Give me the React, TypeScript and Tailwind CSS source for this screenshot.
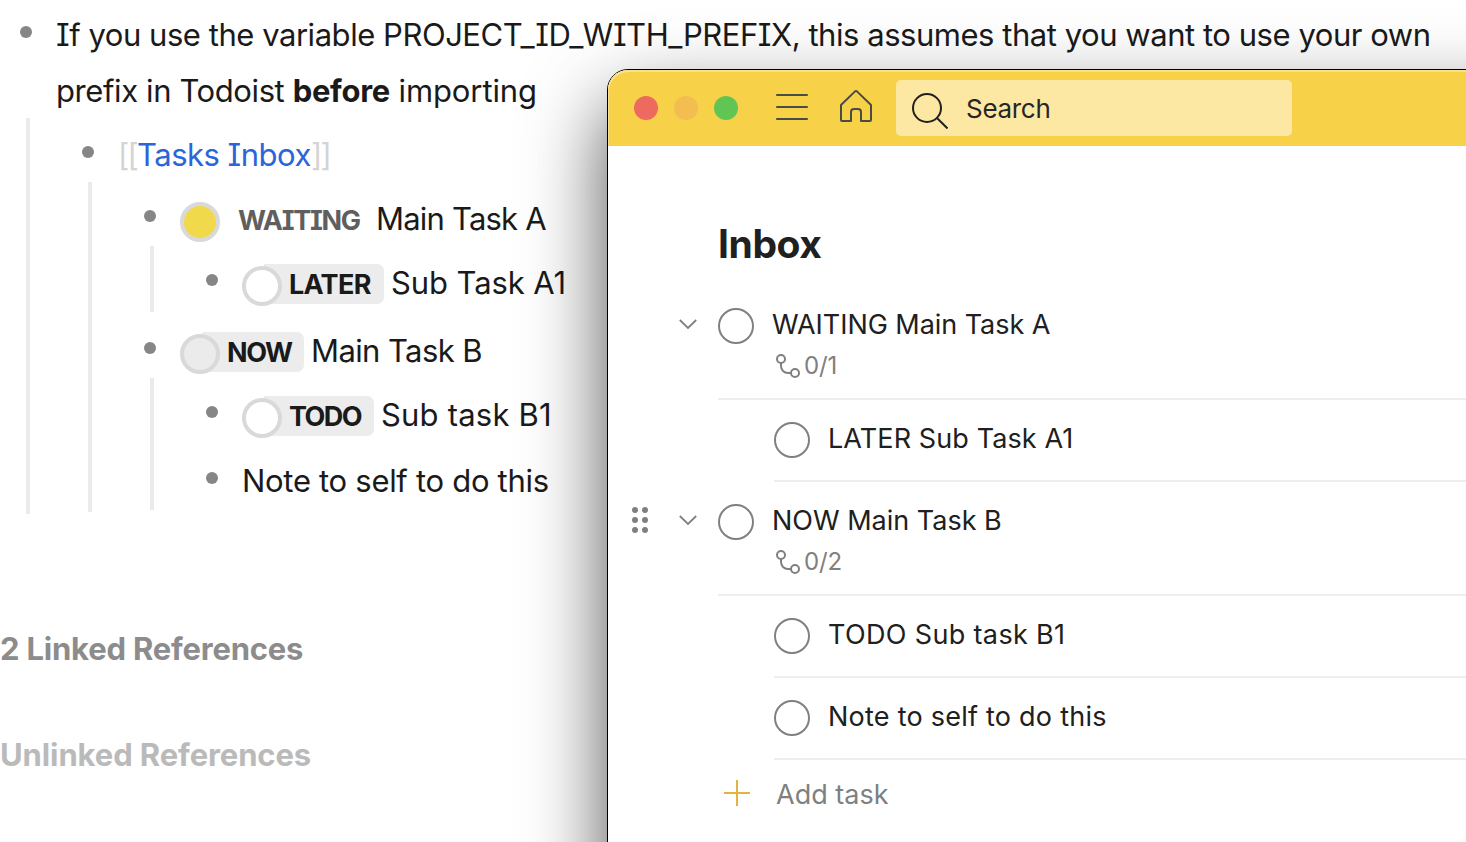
import type { ReactNode } from "react";

const NOTE_FONT =
  "font-['Inter','Liberation_Sans',sans-serif] [font-feature-settings:'cv08'_1]";

function Row({
  children,
  low = false,
}: {
  children: ReactNode;
  low?: boolean;
}) {
  return (
    <div className={low ? "flex h-[66px] items-start pt-0.5" : "flex h-16 items-start"}>
      <span className="mt-7 ml-[52px] size-3 shrink-0 rounded-full bg-[#868686]" />
      <div className="ml-6 flex items-start whitespace-nowrap">{children}</div>
    </div>
  );
}

function Text({ children, className = "" }: { children: ReactNode; className?: string }) {
  return <span className={`pt-[9px] leading-14 ${className}`}>{children}</span>;
}

function Marker({
  label,
  width,
  fill = "bg-white",
  tracking,
}: {
  label: string;
  width: string;
  fill?: string;
  tracking: string;
}) {
  return (
    <span className="flex">
      <span
        className={`z-10 mt-5 size-10 shrink-0 rounded-full border-4 border-[#d9d9d9] ${fill}`}
      />
      <span
        className={`mt-[18px] -ml-[18px] h-10 rounded-r-[7px] bg-[#ececec] pt-px pl-[25px] text-[27px] leading-10 font-bold ${width} ${tracking}`}
      >
        {label}
      </span>
    </span>
  );
}

function Outline() {
  return (
    <div className={`text-[31px] text-[#1a1a1a] ${NOTE_FONT}`}>
      <div className="flex h-[118px] items-start pt-[7px]">
        <span className="mt-[19px] ml-5 size-3 shrink-0 rounded-full bg-[#868686]" />
        <p className="ml-6 leading-14 whitespace-nowrap">
          <span className="tracking-[-0.46px]">
            If you use the variable PROJECT_ID_WITH_PREFIX, this assumes that you want to use your own
          </span>
          <br />
          <span className="tracking-[-0.4px]">prefix in Todoist </span>
          <b className="tracking-[-0.3px]">before</b>
          <span className="tracking-[-0.1px]"> importing</span>
        </p>
      </div>

      <div className="ml-[26px] border-l-4 border-[#ebebeb] pb-0.5">
        <Row>
          <Text className="tracking-[-0.5px] text-[#2b65d9]">
            <span className="tracking-[-1.8px] text-[#d4d4d4]">[[</span>Tasks Inbox
            <span className="tracking-[-1.8px] text-[#d4d4d4]">]]</span>
          </Text>
        </Row>
        <div className="ml-[58px] border-l-4 border-[#ebebeb] pb-0.5">
          <Row>
            <span className="mt-5 size-10 rounded-full border-4 border-[#d9d9d9] bg-[#f0d94a]" />
            <span className="mt-[18px] ml-[18px] w-[138px] pt-px text-[27px] leading-10 font-bold tracking-[-1.3px] text-[#5f5f5f]">
              WAITING
            </span>
            <Text className="tracking-[-0.8px]">Main Task A</Text>
          </Row>
          <div className="ml-[58px] border-l-4 border-[#ebebeb] pb-0.5">
            <Row>
              <Marker label="LATER" width="w-[120px]" tracking="tracking-[-0.7px]" />
              <Text className="ml-[7px] tracking-[-0.1px]">Sub Task A1</Text>
            </Row>
          </div>
          <Row low>
            <Marker label="NOW" width="w-[102px]" fill="bg-[#ebebeb]" tracking="tracking-[-1.4px]" />
            <Text className="ml-[7px] tracking-[-0.6px]">Main Task B</Text>
          </Row>
          <div className="ml-[58px] border-l-4 border-[#ebebeb] pb-0.5">
            <Row>
              <Marker label="TODO" width="w-[110px]" tracking="tracking-[-1.6px]" />
              <Text className="ml-[7px] tracking-[0.2px]">Sub task B1</Text>
            </Row>
            <Row low>
              <Text className="tracking-[-0.3px]">Note to self to do this</Text>
            </Row>
          </div>
        </div>
      </div>

      <div className="mt-[115px] flex flex-col gap-[66px] leading-10 font-bold">
        <h2 className="tracking-[-0.2px] text-[#8c8c8c]">2 Linked References</h2>
        <h2 className="tracking-[-0.1px] text-[#bababa]">Unlinked References</h2>
      </div>
    </div>
  );
}

function TitleBar() {
  return (
    <header className="flex h-[76px] items-start rounded-tl-[20px] bg-[#f7d148] shadow-[inset_1px_2px_0_#fbe08a]">
      <div className="mt-[26px] ml-[26px] flex gap-4">
        <span className="size-6 rounded-full bg-[#ed6a5e]" />
        <span className="size-6 rounded-full bg-[#f4bd50]" />
        <span className="size-6 rounded-full bg-[#61c554]" />
      </div>
      <svg className="mt-5 ml-[38px] size-8" viewBox="0 0 32 32" fill="none" stroke="#4b4b46" strokeWidth="2" strokeLinecap="round">
        <path d="M1 5H31M1 17H31M1 29H31" />
      </svg>
      <svg className="mt-5 ml-8 size-8" viewBox="0 0 32 32" fill="none" stroke="#4b4b46" strokeWidth="2" strokeLinejoin="round">
        <path d="M1 15 14.8 1.6a1.8 1.8 0 0 1 2.4 0L31 15V30a1 1 0 0 1-1 1H21V22a3 3 0 0 0-3-3H14a3 3 0 0 0-3 3V31H2a1 1 0 0 1-1-1Z" />
      </svg>
      <div className="mt-2.5 ml-6 flex h-14 w-[396px] rounded-[5px] bg-[#fce8a3]">
        <svg className="mt-[13px] ml-4 size-9" viewBox="0 0 36 36" fill="none" stroke="#202020" strokeWidth="2">
          <circle cx="15" cy="15" r="14" />
          <path d="M25 25 35.5 35.5" />
        </svg>
        <span className="ml-[18px] pt-[9px] text-[26px] leading-10 tracking-[-0.3px] text-[#262626]">
          Search
        </span>
      </div>
    </header>
  );
}

function Grip() {
  return (
    <svg className="mt-[25px] h-[26px] w-4 fill-[#808080]" viewBox="0 0 16 26">
      {[3, 13, 23].map((y) => (
        <g key={y}>
          <circle cx="3" cy={y} r="3" />
          <circle cx="13" cy={y} r="3" />
        </g>
      ))}
    </svg>
  );
}

function Check() {
  return <span className="mt-[22px] size-9 shrink-0 rounded-full border-2 border-[#808080]" />;
}

function ParentTask({
  title,
  count,
  tracking,
  grip = false,
}: {
  title: string;
  count: string;
  tracking: string;
  grip?: boolean;
}) {
  return (
    <li className="flex h-[114px] items-start">
      <div className="ml-6 w-4">{grip && <Grip />}</div>
      <svg className="mt-8 ml-[31px] h-3 w-[18px]" viewBox="0 0 18 12" fill="none" stroke="#808080" strokeWidth="1.8">
        <path d="M.8 2 9 10 17.2 2" />
      </svg>
      <div className="ml-[21px] flex h-full flex-1 border-b-2 border-[#eeeeee]">
        <Check />
        <div className="ml-[18px] pt-[19px]">
          <div className={`text-[27px] leading-10 whitespace-nowrap text-[#202020] ${tracking}`}>{title}</div>
          <div className="mt-1.5 ml-1 flex items-start text-[#808080]">
            <svg className="mt-[3px] size-6" viewBox="0 0 24 24" fill="none" stroke="currentColor" strokeWidth="2">
              <circle cx="5" cy="5" r="4" />
              <circle cx="19" cy="19" r="4" />
              <path d="M5 9v3a7 7 0 0 0 7 7h3" />
            </svg>
            <span className="ml-1 text-[24px] leading-[30px] tracking-[-0.2px]">{count}</span>
          </div>
        </div>
      </div>
    </li>
  );
}

function SubTask({ title, tracking }: { title: string; tracking: string }) {
  return (
    <li className="ml-[166px] flex h-[82px] items-start border-b-2 border-[#eeeeee]">
      <Check />
      <span className={`ml-[18px] pt-[19px] text-[27px] leading-10 whitespace-nowrap text-[#202020] ${tracking}`}>
        {title}
      </span>
    </li>
  );
}

function TodoWindow() {
  return (
    <section className="absolute top-[69px] left-[607px] h-[900px] w-[1100px] rounded-tl-[21px] border border-black bg-white font-['Inter','Liberation_Sans',sans-serif] shadow-[0_36px_80px_rgba(0,0,0,0.68)]">
      <TitleBar />
      <h1 className="mt-[74px] ml-[110px] text-[39px] leading-12 font-bold tracking-[-0.4px] text-[#202020]">
        Inbox
      </h1>
      <ul className="mt-[18px]">
        <ParentTask title="WAITING Main Task A" count="0/1" tracking="tracking-[-0.05px]" />
        <SubTask title="LATER Sub Task A1" tracking="tracking-[0.1px]" />
        <ParentTask title="NOW Main Task B" count="0/2" tracking="tracking-[0px]" grip />
        <SubTask title="TODO Sub task B1" tracking="tracking-[0.35px]" />
        <SubTask title="Note to self to do this" tracking="tracking-[0.24px]" />
      </ul>
      <div className="ml-[116px] flex items-start pt-[15px]">
        <svg className="mt-[5px] size-[26px]" viewBox="0 0 26 26" stroke="#e3b341" strokeWidth="2">
          <path d="M13 0V26M0 13H26" />
        </svg>
        <span className="ml-[26px] text-[27px] leading-10 text-[#808080]">Add task</span>
      </div>
    </section>
  );
}

export default function App() {
  return (
    <main className="relative h-screen w-full overflow-hidden bg-white">
      <Outline />
      <TodoWindow />
    </main>
  );
}
